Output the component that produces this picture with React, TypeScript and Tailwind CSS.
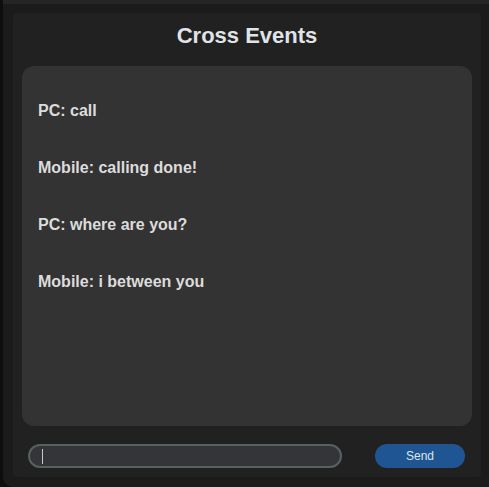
import React from "react";

const messages = ["PC: call", "Mobile: calling done!", "PC: where are you?", "Mobile: i between you"];

export default function App() {
  return (
    <div
      className="flex h-[487px] w-[489px] bg-[#0e0e0e]"
      style={{ fontFamily: '"Liberation Sans", Arial, sans-serif' }}
    >
      <div className="ml-[3px] flex flex-1 flex-col overflow-hidden rounded-bl-[10px] bg-[#1b1b1b]">
        <div className="h-[4px] bg-[#252525]" />
        <div className="mb-[10px] ml-[10px] mr-[8px] mt-[9px] flex flex-1 flex-col rounded-[4px] bg-[#212121] px-[9px]">
          <div className="flex h-[53px] items-center justify-center pb-[8px]">
            <h1 className="text-[22px] font-bold leading-none text-[#e0e4e8]">Cross Events</h1>
          </div>
          <div className="flex h-[360px] flex-col gap-[37px] rounded-[12px] bg-[#333333] px-4 pt-[35px]">
            {messages.map((m) => (
              <div key={m} className="text-[16px] font-bold leading-[20px] text-[#dcdcdc]">
                {m}
              </div>
            ))}
          </div>
          <div className="flex flex-1 items-center pl-[6px] pr-[7px] pt-[8px]">
            <div className="relative h-[24px] w-[314px] rounded-full border-2 border-[#5a6060] bg-[#333538]">
              <div className="absolute left-[12px] top-[3px] h-[15px] w-[1px] bg-[#c8c8c8]" />
            </div>
            <div className="flex-1" />
            <button className="flex h-[24px] w-[90px] items-center justify-center rounded-full bg-[#1f5592] text-[12px] text-[#dde4ee]">
              Send
            </button>
          </div>
        </div>
      </div>
    </div>
  );
}
